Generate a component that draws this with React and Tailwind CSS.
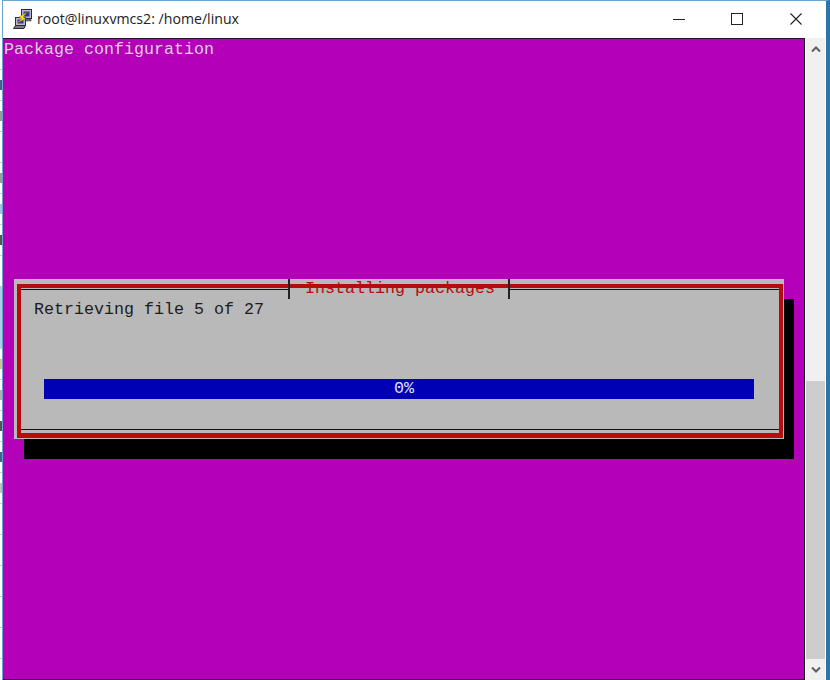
// PuTTY window showing a debconf progress dialog
const strip = [
  { bit: '#44618f' },
  { bit: '#9a9a9a' },
  {},
  { bit: '#9a9a9a' },
  { bit: '#9cc4e4' },
  { bit: '#555555' },
  {},
  { fill: '#a8d0ec' },
  { fill: '#a8d0ec' },
  { bit: '#d8c090' },
  { bit: '#b0b0b0' },
  { bit: '#555555' },
  { bit: '#44618f' },
  { bit: '#c0c0c0' },
  {},
  {},
  {},
  {},
  {},
  {},
]

function PuttyIcon() {
  return (
    <svg width="20" height="20" viewBox="0 0 20 20" className="shrink-0">
      {/* back computer */}
      <rect x="8.5" y="0.5" width="10" height="9" fill="#b8b8cc" stroke="#2a2a3a" />
      <rect x="10.5" y="2.5" width="6" height="5" fill="#34349a" />
      <rect x="10" y="10" width="8" height="2" fill="#7a7a8a" stroke="#2a2a3a" strokeWidth="0.5" />
      {/* front computer */}
      <rect x="2.5" y="8.5" width="10" height="8" fill="#b8b8cc" stroke="#2a2a3a" />
      <rect x="4.5" y="10.5" width="6" height="4" fill="#34349a" />
      <path d="M0.5 19.5 L2.5 16.5 H12.5 L11 19.5 Z" fill="#7a7a8a" stroke="#2a2a3a" />
      {/* bolt */}
      <path d="M14 3 L6 8 L9 9.5 L4 14 L13 9.5 L10 8 Z" fill="#f8e81c" stroke="#8a7a00" strokeWidth="0.5" />
    </svg>
  )
}

export default function App() {
  const mono = { fontFamily: '"Liberation Mono", monospace' }

  return (
    <div className="w-[830px] h-[680px] flex overflow-hidden bg-white">
      {/* sliver of whatever is behind the window */}
      <div className="w-[2px] flex flex-col shrink-0">
        <div className="h-[70px] shrink-0 border-b border-[#cccccc]" />
        {strip.map((row, i) => (
          <div
            key={i}
            className="h-[31px] shrink-0 flex items-center border-b border-[#cccccc]"
            style={{ background: row.fill || '#ffffff' }}
          >
            {row.bit && <div className="w-full h-[10px]" style={{ background: row.bit }} />}
          </div>
        ))}
      </div>

      <div className="flex-1 flex flex-col border-l border-t border-[#6aa5cf] border-r-4 border-r-[#2a76a8]">
        {/* Title bar */}
        <div className="h-[37px] shrink-0 flex items-center bg-white pl-[10px] pb-[1px]">
          <PuttyIcon />
          <span className="ml-[4px] text-[14.15px] text-[#222]" style={{ fontFamily: '"Open Sans", sans-serif' }}>
            root@linuxvmcs2: /home/linux
          </span>
          <div className="ml-auto flex items-center pr-[24px]">
            <div className="w-[12px] h-[1px] bg-[#222] mr-[46px]" />
            <div className="w-[12px] h-[12px] border border-[#222] mr-[47px]" />
            <svg width="12" height="12" viewBox="0 0 12 12">
              <path d="M0.5 0.5 L11.5 11.5 M11.5 0.5 L0.5 11.5" stroke="#222" strokeWidth="1.1" fill="none" />
            </svg>
          </div>
        </div>

        <div className="flex-1 flex min-h-0">
          {/* Terminal */}
          <div
            className="w-[802px] bg-[#b400b8] border-t border-r border-b border-t-[#2a1030] border-r-[#1a1a1a] border-b-[#3a0a3a] text-[16.67px] leading-[20px] pl-[1px] pt-[1px]"
            style={mono}
          >
            <div className="h-[20px] text-[#dccfdf] whitespace-pre">Package configuration</div>

            {/* Dialog */}
            <div className="mt-[219px] ml-[10px] w-[770px] h-[160px] bg-[#b9b9b9] pt-[5px] pl-[3px] pr-[1px] pb-[1px] shadow-[10px_20px_0_#000]">
              <div className="relative h-[154px] border-[4px] border-b-[5px] border-[#b80b0b] pt-[1px]">
                <div className="h-[141px] border-t border-b border-[#111] pt-[10px]">
                  <div className="pl-[13px] text-[#1c1c1c] whitespace-pre">Retrieving file 5 of 27</div>

                  {/* Progress gauge */}
                  <div className="mt-[59px] ml-[23px] w-[710px] h-[20px] bg-[#0000b4] flex items-center justify-center pl-[10px] text-[#e4e4f4]">
                    0%
                  </div>
                </div>

                {/* Title set into the frame */}
                <div className="absolute left-[267px] -top-[9px] w-[222px] h-[20px] bg-[#b9b9b9] border-x-2 border-[#222] pl-[2px] text-[#b80b0b] text-center leading-[20px]">
                  Installing packages
                  <div className="absolute left-0 right-0 top-[5px] h-[4px] bg-[#b80b0b]" />
                </div>
              </div>
            </div>
          </div>

          {/* Scrollbar */}
          <div className="flex-1 ml-[1px] bg-[#f0f0f0] flex flex-col items-stretch border-r border-white">
            <div className="h-[21px] pt-[2px] flex items-center justify-center">
              <svg width="10" height="7" viewBox="0 0 10 7">
                <path d="M1 5.5 L5 1.5 L9 5.5" stroke="#606060" strokeWidth="2" fill="none" />
              </svg>
            </div>
            <div className="flex-1 flex flex-col">
              <div className="h-[322px]" />
              <div className="h-[278px] bg-[#cdcdcd]" />
            </div>
            <div className="h-[21px] flex items-center justify-center">
              <svg width="10" height="7" viewBox="0 0 10 7">
                <path d="M1 1.5 L5 5.5 L9 1.5" stroke="#606060" strokeWidth="2" fill="none" />
              </svg>
            </div>
          </div>
        </div>
      </div>
    </div>
  )
}
